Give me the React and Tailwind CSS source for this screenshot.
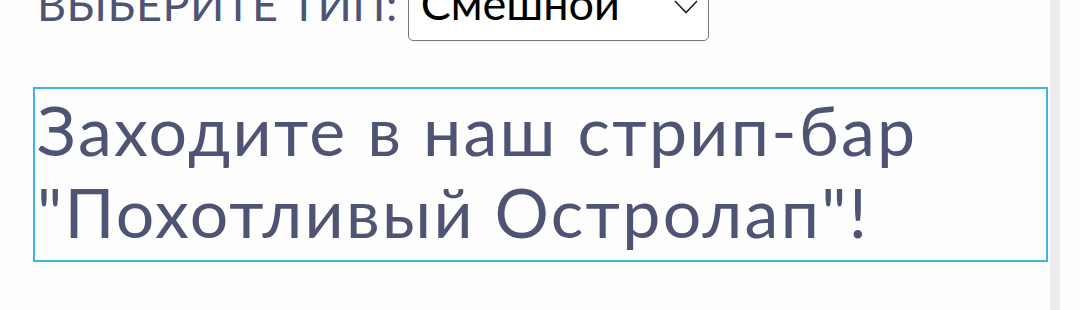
import { useState } from 'react'

const TYPES = ['Смешной', 'Серьёзный', 'Романтичный']

const font = { fontFamily: 'Lato, "Noto Sans", sans-serif' }

export default function App() {
  const [type, setType] = useState(TYPES[0])

  return (
    <div className="w-[1080px] h-[310px] overflow-hidden bg-[#fefefe] flex" style={font}>
      <div className="flex-1 pl-[33px] pr-[2px] -mt-[34px]">
        <div className="flex items-center gap-[10px] pl-[4px]">
          <label className="text-[45px] leading-[54px] tracking-[0.5px] uppercase text-[#4f5374]">Выберите тип:</label>
          <div className="relative">
            <select
              value={type}
              onChange={(e) => setType(e.target.value)}
              className="appearance-none w-[301px] h-[75px] border border-[#767676] rounded-[5px] bg-white pl-[12px] text-[45px] text-black outline-none"
              style={font}
            >
              {TYPES.map((t) => (
                <option key={t}>{t}</option>
              ))}
            </select>
            <svg className="absolute right-[11px] top-[34px] pointer-events-none" width="24" height="14" viewBox="0 0 24 14">
              <path d="M1 1 L12 12.5 L23 1" fill="none" stroke="#222" strokeWidth="1.6" />
            </svg>
          </div>
        </div>
        <div className="mt-[46px] border-2 border-[#3cb6dc] px-[2px] pt-0 pb-[7px] text-[68px] leading-[82px] tracking-[2.3px] text-[#4f5374]">
          Заходите в наш стрип-бар "Похотливый Остролап"!
        </div>
      </div>
      <div className="w-[10px] bg-[#ececee]" />
      <div className="w-[20px]" />
    </div>
  )
}
